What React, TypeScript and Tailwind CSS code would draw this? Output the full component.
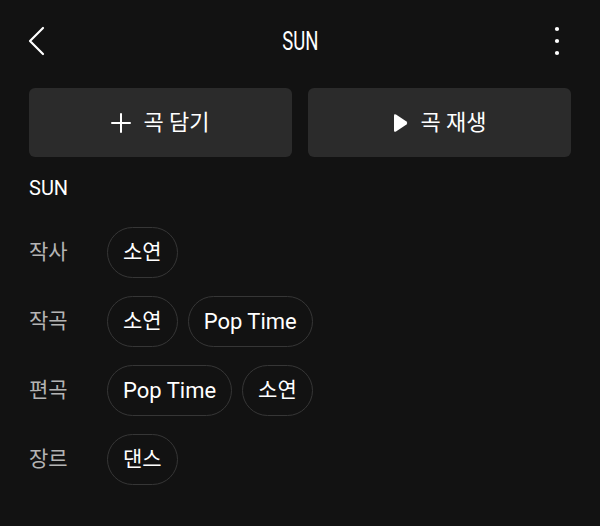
import React from "react";

const KR = { fontFamily: 'Roboto, "Noto Sans CJK KR", sans-serif' };

function Chip({ text }: { text: string }) {
  const latin = /^[A-Za-z ]+$/.test(text);
  return (
    <div
      className={
        latin
          ? "h-[51px] px-[15px] flex items-center rounded-full border border-[#363636] text-white text-[22px] leading-none"
          : "h-[51px] px-[15px] flex items-center rounded-full border border-[#363636] text-white text-[21px] leading-none"
      }
    >
      {text}
    </div>
  );
}

function Row({ label, items }: { label: string; items: string[] }) {
  return (
    <div className="flex items-center h-[51px]">
      <div className="w-[78px] text-[21px] text-[#b4b4b4] leading-none">{label}</div>
      <div className="flex gap-[10px]">
        {items.map((it, i) => (
          <Chip key={i} text={it} />
        ))}
      </div>
    </div>
  );
}

export default function App() {
  return (
    <div className="w-[600px] h-[526px] bg-[#121212] overflow-hidden" style={KR}>
      <div className="h-[82px] flex items-center justify-between pl-[26px] pr-[38px] relative">
        <svg width="22" height="30" viewBox="0 0 22 30" className="text-white">
          <polyline points="17,2 4,15 17,28" fill="none" stroke="currentColor" strokeWidth="2.2" strokeLinecap="round" strokeLinejoin="round" />
        </svg>
        <div className="absolute left-0 right-0 top-0 h-[82px] flex items-center justify-center pointer-events-none">
          <span className="text-white text-[25px] scale-x-[0.74] leading-none">SUN</span>
        </div>
        <svg width="10" height="30" viewBox="0 0 10 30">
          <circle cx="5" cy="3" r="2.1" fill="#fff" />
          <circle cx="5" cy="15" r="2.1" fill="#fff" />
          <circle cx="5" cy="27" r="2.1" fill="#fff" />
        </svg>
      </div>
      <div className="px-[29px] pt-[6px]">
        <div className="grid grid-cols-2 gap-[16px]">
          <div className="h-[69px] rounded-[6px] bg-[#2b2b2b] flex items-center justify-center gap-[12px] text-white text-[22px]">
            <svg width="20" height="20" viewBox="0 0 20 20">
              <path d="M10 1 V19 M1 10 H19" stroke="#fff" strokeWidth="2" strokeLinecap="round" />
            </svg>
            <span>곡 담기</span>
          </div>
          <div className="h-[69px] rounded-[6px] bg-[#2b2b2b] flex items-center justify-center gap-[12px] text-white text-[22px]">
            <svg width="16" height="20" viewBox="0 0 16 20">
              <path d="M2 2.5 Q2 0.5 4 1.6 L14.5 8.6 Q16 10 14.5 11.4 L4 18.4 Q2 19.5 2 17.5 Z" fill="#fff" />
            </svg>
            <span>곡 재생</span>
          </div>
        </div>
        <div className="mt-[19px] text-white text-[20px] leading-[24px]">SUN</div>
        <div className="mt-[27px] flex flex-col gap-[18px]">
          <Row label="작사" items={["소연"]} />
          <Row label="작곡" items={["소연", "Pop Time"]} />
          <Row label="편곡" items={["Pop Time", "소연"]} />
          <Row label="장르" items={["댄스"]} />
        </div>
      </div>
    </div>
  );
}
